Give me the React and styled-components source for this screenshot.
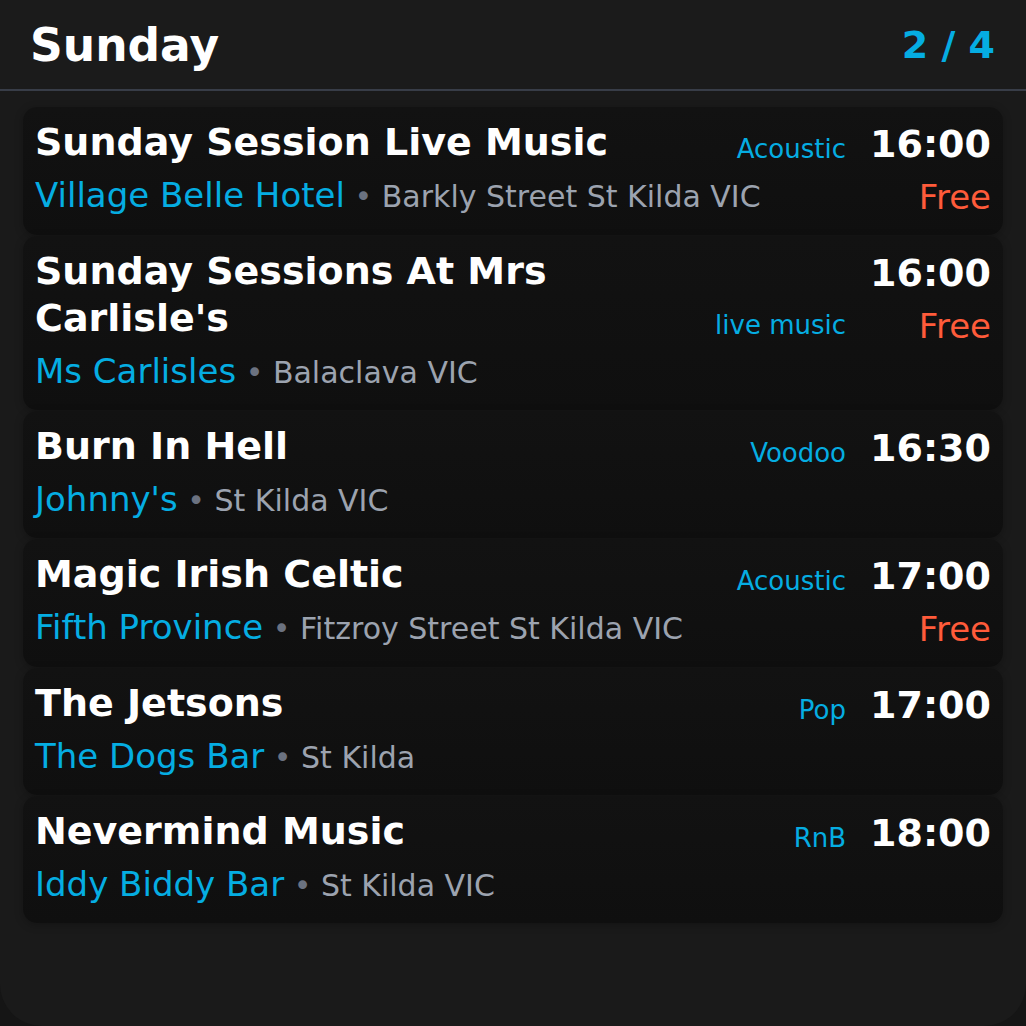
import React from "react";
import styled, { createGlobalStyle } from "styled-components";

const colors = {
  page: "#151515",
  panel: "#1a1a1a",
  line: "#383d48",
  white: "#ffffff",
  cyan: "#05ade2",
  gray: "#9ca3af",
  dot: "#6b7280",
  free: "#ff5b3a",
};

const GlobalStyle = createGlobalStyle`
  html, body {
    margin: 0;
    padding: 0;
    background: ${colors.page};
  }
  body {
    font-family: "DejaVu Sans", "Verdana", sans-serif;
    -webkit-font-smoothing: antialiased;
  }
  * { box-sizing: border-box; }
`;

const Panel = styled.div`
  width: 1026px;
  height: 1026px;
  background: ${colors.panel};
  border-radius: 0 0 42px 42px;
  overflow: hidden;
  display: flex;
  flex-direction: column;
`;

const Header = styled.header`
  height: 91px;
  display: flex;
  align-items: center;
  justify-content: space-between;
  padding: 3px 31px 0 30px;
  background: #1b1b1b;
  border-bottom: 2px solid ${colors.line};
`;

const Day = styled.h1`
  margin: 0;
  font-size: 45.5px;
  line-height: 1.2;
  font-weight: 700;
  color: ${colors.white};
`;

const Count = styled.span`
  font-size: 38px;
  line-height: 1.2;
  font-weight: 700;
  color: ${colors.cyan};
`;

const List = styled.div`
  display: flex;
  flex-direction: column;
  gap: 1px;
  padding: 16px 23px 0;
`;

const Card = styled.article`
  display: flex;
  gap: 24px;
  padding: 12px 12px 17px;
  background: linear-gradient(180deg, #121212 0%, #0f0f0f 100%);
  border-radius: 14px;
  box-shadow: 0 2px 8px rgba(0, 0, 0, 0.25);
`;

const Main = styled.div`
  flex: 1;
  min-width: 0;
  display: flex;
  flex-direction: column;
  gap: 7px;
`;

const TitleRow = styled.div`
  display: flex;
  align-items: flex-end;
  gap: 20px;
`;

const Title = styled.h2`
  flex: 1;
  margin: 0;
  font-size: 38px;
  line-height: 47px;
  font-weight: 700;
  color: ${colors.white};
`;

const Tag = styled.span`
  font-size: 26px;
  line-height: 34px;
  color: ${colors.cyan};
  white-space: nowrap;
`;

const Where = styled.div`
  font-size: 34px;
  line-height: 44px;
  white-space: nowrap;
`;

const Venue = styled.span`
  color: ${colors.cyan};
`;

const Place = styled.span`
  font-size: 30px;
  line-height: 1;
  color: ${colors.gray};
`;

const Dot = styled.span`
  color: ${colors.dot};
`;

const Side = styled.div`
  display: flex;
  flex-direction: column;
  align-items: flex-end;
  gap: 8px;
  padding-top: 2px;
`;

const Time = styled.span`
  font-size: 38px;
  line-height: 47px;
  font-weight: 700;
  color: ${colors.white};
`;

const Price = styled.span`
  font-size: 34px;
  line-height: 42px;
  color: ${colors.free};
`;

const events = [
  { title: "Sunday Session Live Music", tag: "Acoustic", time: "16:00", free: true, venue: "Village Belle Hotel", place: "Barkly Street St Kilda VIC" },
  { title: "Sunday Sessions At Mrs Carlisle's", tag: "live music", time: "16:00", free: true, venue: "Ms Carlisles", place: "Balaclava VIC" },
  { title: "Burn In Hell", tag: "Voodoo", time: "16:30", venue: "Johnny's", place: "St Kilda VIC" },
  { title: "Magic Irish Celtic", tag: "Acoustic", time: "17:00", free: true, venue: "Fifth Province", place: "Fitzroy Street St Kilda VIC" },
  { title: "The Jetsons", tag: "Pop", time: "17:00", venue: "The Dogs Bar", place: "St Kilda" },
  { title: "Nevermind Music", tag: "RnB", time: "18:00", venue: "Iddy Biddy Bar", place: "St Kilda VIC" },
];

function EventCard({ ev }) {
  return (
    <Card>
      <Main>
        <TitleRow>
          <Title>{ev.title}</Title>
          <Tag>{ev.tag}</Tag>
        </TitleRow>
        <Where>
          <Venue>{ev.venue}</Venue>
          <Place>
            <Dot> • </Dot>
            {ev.place}
          </Place>
        </Where>
      </Main>
      <Side>
        <Time>{ev.time}</Time>
        {ev.free && <Price>Free</Price>}
      </Side>
    </Card>
  );
}

export default function App() {
  return (
    <>
      <GlobalStyle />
      <Panel>
        <Header>
          <Day>Sunday</Day>
          <Count>2 / 4</Count>
        </Header>
        <List>
          {events.map((ev) => (
            <EventCard key={ev.title} ev={ev} />
          ))}
        </List>
      </Panel>
    </>
  );
}
